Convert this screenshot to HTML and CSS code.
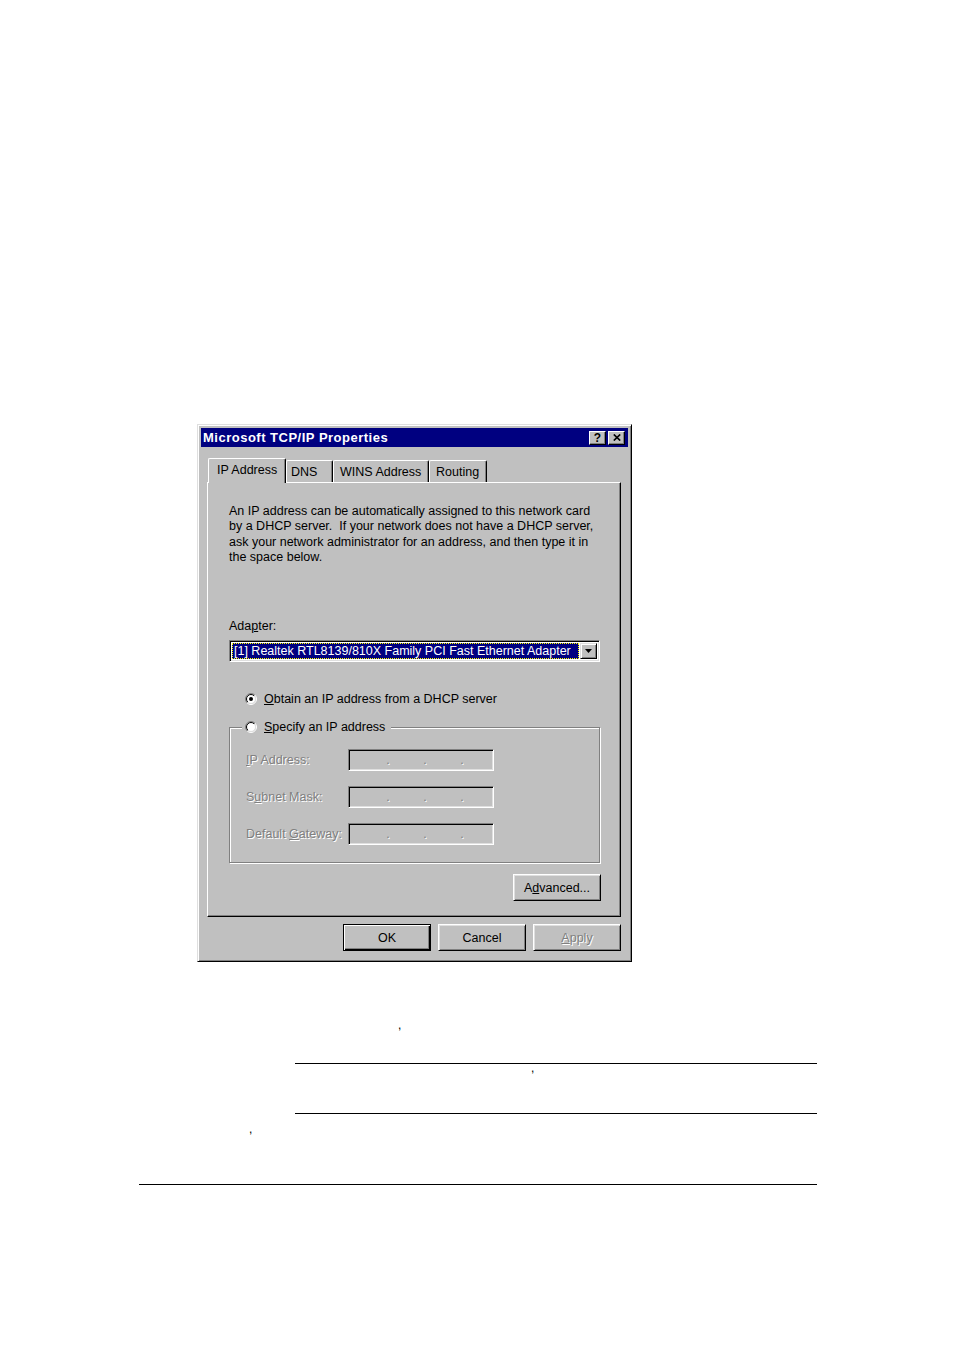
FILE: index.html
```html
<!DOCTYPE html>
<html>
<head>
<meta charset="utf-8">
<title>Microsoft TCP/IP Properties</title>
<link rel="stylesheet" href="styles.css">
</head>
<body>
<div class="page">
  <div class="dialog">
    <div class="titlebar">
      <span class="title">Microsoft TCP/IP Properties</span>
      <div class="tb-btns">
        <span class="tb-btn tb-help">?</span>
        <span class="tb-btn"><svg width="8" height="7" viewBox="0 0 8 7"><path d="M0.8 0.5 L7.2 6.5 M7.2 0.5 L0.8 6.5" stroke="#000" stroke-width="1.7" fill="none"/></svg></span>
      </div>
    </div>
    <div class="body">
      <div class="tabs">
        <div class="tab tab-active tab-ip">IP Address</div>
        <div class="tab tab-dns">DNS</div>
        <div class="tab tab-wins">WINS Address</div>
        <div class="tab tab-routing">Routing</div>
      </div>
      <div class="panel">
        <p class="intro">An IP address can be automatically assigned to this network card<br>by a DHCP server.&nbsp; If your network does not have a DHCP server,<br>ask your network administrator for an address, and then type it in<br>the space below.</p>
        <div class="label-adapter">Ada<u>p</u>ter:</div>
        <div class="combo">
          <div class="combo-value">[1] Realtek RTL8139/810X Family PCI Fast Ethernet Adapter</div>
          <div class="combo-arrow"><svg width="7" height="4" viewBox="0 0 7 4"><path d="M0 0 H7 L3.5 4 Z" fill="#000"/></svg></div>
        </div>
        <div class="radio-row radio-first">
          <svg class="radio" width="12" height="12" viewBox="0 0 12 12">
            <defs>
              <linearGradient id="ro1" x1="0" y1="0" x2="1" y2="1"><stop offset="0.5" stop-color="#808080"/><stop offset="0.5" stop-color="#ffffff"/></linearGradient>
              <linearGradient id="ri1" x1="0" y1="0" x2="1" y2="1"><stop offset="0.5" stop-color="#000000"/><stop offset="0.5" stop-color="#dfdfdf"/></linearGradient>
            </defs>
            <circle cx="6" cy="6" r="5.5" fill="none" stroke="url(#ro1)"/>
            <circle cx="6" cy="6" r="4.5" fill="#fff" stroke="url(#ri1)"/>
            <circle cx="6" cy="6" r="2" fill="#000"/>
          </svg>
          <span><u>O</u>btain an IP address from a DHCP server</span>
        </div>
        <div class="group">
          <div class="radio-row legend">
            <svg class="radio" width="12" height="12" viewBox="0 0 12 12">
              <defs>
                <linearGradient id="ro2" x1="0" y1="0" x2="1" y2="1"><stop offset="0.5" stop-color="#808080"/><stop offset="0.5" stop-color="#ffffff"/></linearGradient>
                <linearGradient id="ri2" x1="0" y1="0" x2="1" y2="1"><stop offset="0.5" stop-color="#000000"/><stop offset="0.5" stop-color="#dfdfdf"/></linearGradient>
              </defs>
              <circle cx="6" cy="6" r="5.5" fill="none" stroke="url(#ro2)"/>
              <circle cx="6" cy="6" r="4.5" fill="#fff" stroke="url(#ri2)"/>
            </svg>
            <span><u>S</u>pecify an IP address</span>
          </div>
          <div class="field-row field-first">
            <span class="field-label disabled"><u>I</u>P Address:</span>
            <div class="ipfield"><span class="dot disabled">.</span><span class="dot disabled">.</span><span class="dot disabled">.</span></div>
          </div>
          <div class="field-row">
            <span class="field-label disabled">S<u>u</u>bnet Mask:</span>
            <div class="ipfield"><span class="dot disabled">.</span><span class="dot disabled">.</span><span class="dot disabled">.</span></div>
          </div>
          <div class="field-row">
            <span class="field-label disabled">Default <u>G</u>ateway:</span>
            <div class="ipfield"><span class="dot disabled">.</span><span class="dot disabled">.</span><span class="dot disabled">.</span></div>
          </div>
        </div>
        <div class="btn btn-advanced">A<u>d</u>vanced...</div>
      </div>
      <div class="actions">
        <div class="btn btn-default">OK</div>
        <div class="btn">Cancel</div>
        <div class="btn"><span class="disabled"><u>A</u>pply</span></div>
      </div>
    </div>
  </div>
  <div class="doc">
    <div class="mark mark-1">,</div>
    <div class="note">
      <div class="mark mark-2">,</div>
    </div>
    <div class="mark mark-3">,</div>
    <div class="rule"></div>
  </div>
</div>
</body>
</html>
```

FILE: styles.css
```css
html, body {
  margin: 0;
  padding: 0;
  background: #ffffff;
}

.page {
  padding-top: 424px;
  width: 954px;
  height: 1349px;
  box-sizing: border-box;
}

.dialog {
  margin-left: 197px;
  width: 435px;
  box-sizing: border-box;
  background: #c0c0c0;
  border: 1px solid;
  border-color: #dfdfdf #000000 #000000 #dfdfdf;
  box-shadow: inset 1px 1px 0 #ffffff, inset -1px -1px 0 #808080;
  padding: 3px;
  font-family: "Liberation Sans", Arial, sans-serif;
  font-size: 12.5px;
  color: #000;
}

.titlebar {
  height: 19px;
  background: #000080;
  display: flex;
  align-items: center;
  justify-content: space-between;
  padding: 0 3px 0 2px;
}

.title {
  color: #ffffff;
  font-weight: bold;
  font-size: 13px;
  letter-spacing: 0.5px;
}

.tb-btns {
  display: flex;
  gap: 2px;
}

.tb-btn {
  width: 17px;
  height: 14px;
  box-sizing: border-box;
  background: #c0c0c0;
  border: 1px solid;
  border-color: #ffffff #000000 #000000 #ffffff;
  box-shadow: inset -1px -1px 0 #808080;
  display: flex;
  align-items: center;
  justify-content: center;
  font-weight: bold;
  font-size: 12px;
  line-height: 1;
}

.body {
  padding: 11px 7px 7px 6px;
}

.tabs {
  display: flex;
  align-items: flex-end;
  height: 24px;
  padding-left: 1px;
}

.tab {
  height: 22px;
  box-sizing: border-box;
  border-top: 1px solid #ffffff;
  border-left: 1px solid #ffffff;
  border-right: 1px solid #000000;
  border-radius: 2px 2px 0 0;
  box-shadow: inset -1px 0 0 #808080;
  display: flex;
  align-items: center;
  background: #c0c0c0;
  white-space: nowrap;
}

.tab-active {
  height: 25px;
  margin-bottom: -1px;
  position: relative;
  z-index: 1;
  padding-bottom: 3px;
}

.tab-ip { width: 78px; padding-left: 8px; }
.tab-dns { width: 47px; padding-left: 4px; }
.tab-wins { width: 96px; padding-left: 6px; }
.tab-routing { width: 58px; padding-left: 6px; }

.panel {
  width: 414px;
  height: 435px;
  box-sizing: border-box;
  border: 1px solid;
  border-color: #ffffff #000000 #000000 #ffffff;
  box-shadow: inset -1px -1px 0 #808080;
  padding: 21px 20px 0 21px;
  display: flex;
  flex-direction: column;
}

.intro {
  margin: 0;
  line-height: 15.4px;
  white-space: nowrap;
}

.label-adapter {
  margin-top: 53px;
  line-height: 15.4px;
}

.combo {
  margin-top: 6px;
  height: 22px;
  box-sizing: border-box;
  border: 1px solid;
  border-color: #808080 #ffffff #ffffff #808080;
  box-shadow: inset 1px 1px 0 #000000, inset -1px -1px 0 #dfdfdf;
  background: #ffffff;
  padding: 2px;
  display: flex;
}

.combo-value {
  flex: 1;
  background: #000080;
  color: #ffffff;
  outline: 1px dotted #ffff00;
  outline-offset: -1px;
  padding-left: 2px;
  margin-right: 1px;
  display: flex;
  align-items: center;
  white-space: nowrap;
  overflow: hidden;
}

.combo-arrow {
  width: 17px;
  box-sizing: border-box;
  background: #c0c0c0;
  border: 1px solid;
  border-color: #dfdfdf #000000 #000000 #dfdfdf;
  box-shadow: inset 1px 1px 0 #ffffff, inset -1px -1px 0 #808080;
  display: flex;
  align-items: center;
  justify-content: center;
}

.radio-row {
  display: flex;
  align-items: center;
  gap: 7px;
  height: 16px;
}

.radio {
  display: block;
  flex: none;
}

.radio-first {
  margin-top: 29px;
  margin-left: 16px;
}

.group {
  margin-top: 20px;
  height: 136px;
  box-sizing: border-box;
  border: 1px solid #808080;
  box-shadow: inset 1px 1px 0 #ffffff, 1px 1px 0 #ffffff;
  padding-left: 16px;
  display: flex;
  flex-direction: column;
}

.legend {
  margin-top: -9px;
  margin-left: -4px;
  padding: 0 6px 0 3px;
  background: #c0c0c0;
  align-self: flex-start;
}

.field-row {
  display: flex;
  align-items: center;
  margin-top: 15px;
}

.field-first {
  margin-top: 14px;
}

.field-label {
  width: 102px;
  white-space: nowrap;
}

.disabled {
  color: #808080;
  text-shadow: 1px 1px 0 #ffffff;
}

.ipfield {
  width: 146px;
  height: 22px;
  box-sizing: border-box;
  border: 1px solid;
  border-color: #808080 #ffffff #ffffff #808080;
  box-shadow: inset 1px 1px 0 #000000, inset -1px -1px 0 #dfdfdf;
  background: #c0c0c0;
  display: flex;
  align-items: center;
  padding-left: 37px;
  gap: 33px;
}

.dot {
  width: 4px;
  text-align: center;
}

.btn {
  width: 88px;
  height: 27px;
  box-sizing: border-box;
  background: #c0c0c0;
  border: 1px solid;
  border-color: #ffffff #000000 #000000 #ffffff;
  box-shadow: inset 1px 1px 0 #dfdfdf, inset -1px -1px 0 #808080;
  display: flex;
  align-items: center;
  justify-content: center;
}

.btn-default {
  border-color: #000000;
  box-shadow: inset 1px 1px 0 #ffffff, inset -1px -1px 0 #000000, inset -2px -2px 0 #808080;
}

.btn-advanced {
  margin-top: 11px;
  align-self: flex-end;
  margin-right: -1px;
}

.actions {
  width: 414px;
  margin-top: 7px;
  display: flex;
  justify-content: flex-end;
  gap: 7px;
}

.doc {
  margin-left: 139px;
  width: 678px;
  font-family: "Liberation Sans", Arial, sans-serif;
  font-size: 12px;
  color: #000;
}

.mark {
  line-height: 8px;
  height: 8px;
}

.mark-1 {
  margin-top: 59px;
  padding-left: 259px;
}

.note {
  margin-top: 34px;
  margin-left: 156px;
  height: 51px;
  box-sizing: border-box;
  border-top: 1px solid #000;
  border-bottom: 1px solid #000;
}

.mark-2 {
  padding-left: 236px;
}

.mark-3 {
  margin-top: 11px;
  padding-left: 110px;
}

.rule {
  margin-top: 51px;
  height: 1px;
  background: #000;
}
```
